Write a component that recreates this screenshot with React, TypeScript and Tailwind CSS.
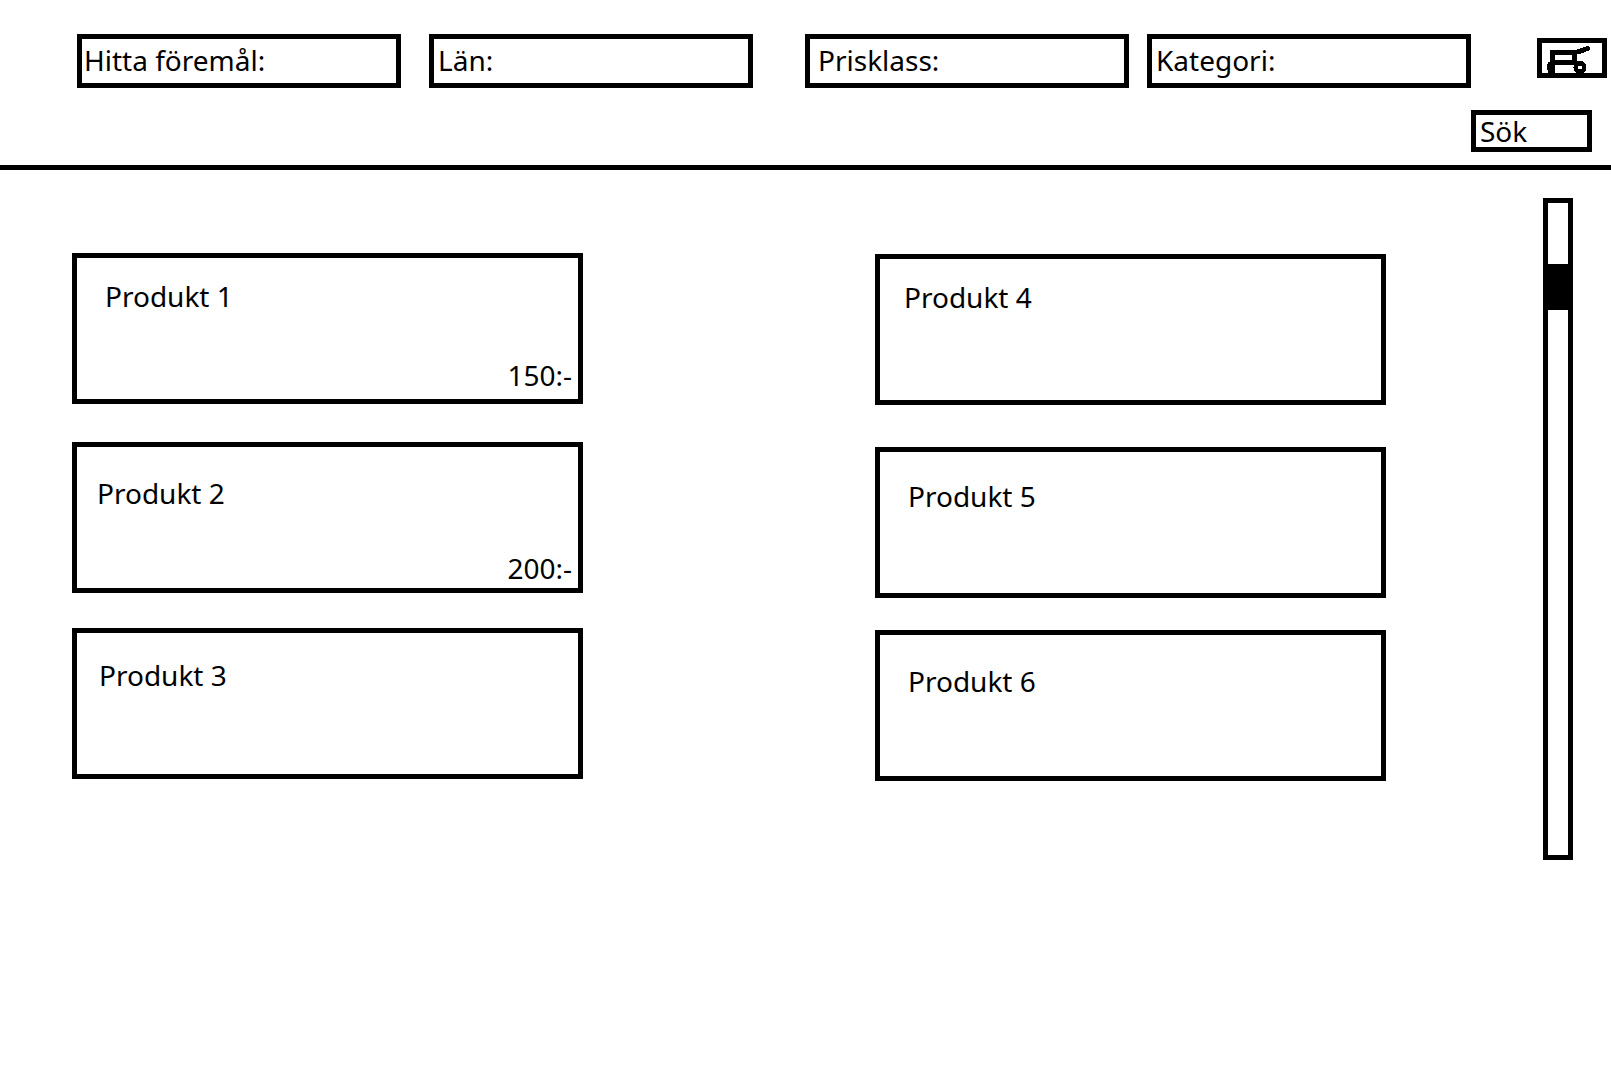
import React from "react";

type Field = { id: string; label: string; box: string; text: string };
type Product = { name: string; price?: string; card: string; text: string };

const fields: Field[] = [
  { id: "item", label: "Hitta föremål:", box: "", text: "pl-0.5" },
  { id: "county", label: "Län:", box: "ml-7", text: "pl-1" },
  { id: "price", label: "Prisklass:", box: "ml-[52px]", text: "pl-2" },
  { id: "category", label: "Kategori:", box: "ml-[18px]", text: "pl-1" },
];

const leftProducts: Product[] = [
  { name: "Produkt 1", price: "150:-", card: "pb-2", text: "pt-5.5 pl-7" },
  { name: "Produkt 2", price: "200:-", card: "mt-[38px] pb-1", text: "pt-7.5 pl-5" },
  { name: "Produkt 3", card: "mt-[35px]", text: "pt-6.5 pl-5.5" },
];

const rightProducts: Product[] = [
  { name: "Produkt 4", card: "", text: "pt-5.5 pl-6" },
  { name: "Produkt 5", card: "mt-[42px]", text: "pt-7 pl-7" },
  { name: "Produkt 6", card: "mt-8", text: "pt-7.5 pl-7" },
];

function SearchField({ id, label, box, text }: Field) {
  return (
    <div className={`flex h-[54px] min-w-0 flex-1 items-center border-5 border-black ${box}`}>
      <label htmlFor={id} className={`pb-0.5 whitespace-nowrap ${text}`}>
        {label}
      </label>
      <input id={id} type="text" className="h-full w-0 min-w-0 flex-1 bg-transparent px-2 outline-none" />
    </div>
  );
}

function ProductCard({ name, price, card, text }: Product) {
  return (
    <article className={`flex h-[151px] flex-col justify-between border-5 border-black ${card}`}>
      <h2 className={text}>{name}</h2>
      {price && <p className="pr-1.5 text-right">{price}</p>}
    </article>
  );
}

function CartIcon() {
  return (
    <svg viewBox="0 0 60 30" className="h-[30px] w-[60px]" fill="none" stroke="black" strokeWidth="5" shapeRendering="crispEdges" aria-hidden="true">
      <path d="M10.5 22V9.5H32.5V19.5H10.5" />
      <path d="M33 9.5L37 8.5L45.5 5.5" strokeLinecap="round" />
      <path d="M8 18H13V30H6V27H5V21H6V19H8Z" fill="black" stroke="none" />
      <circle cx="38" cy="24.5" r="4.2" strokeWidth="4.6" />
    </svg>
  );
}

export default function App() {
  return (
    <div className="min-h-screen bg-white font-['Noto_Sans',sans-serif] text-[28px] leading-8 text-black">
      <header className="border-b-5 border-black pt-[34px] pb-[13px]">
        <form onSubmit={(e) => e.preventDefault()}>
          <div className="flex items-start pr-1 pl-[77px]">
            {fields.map((f) => (
              <SearchField key={f.id} {...f} />
            ))}
            <button type="button" aria-label="Kundvagn" className="mt-1 ml-[66px] h-10 w-[70px] shrink-0 border-5 border-black">
              <CartIcon />
            </button>
          </div>
          <div className="mt-[22px] flex justify-end pr-[19px]">
            <button type="submit" className="h-[42px] w-[121px] border-5 border-black pb-0.5 pl-1 text-left">
              Sök
            </button>
          </div>
        </form>
      </header>

      <main className="flex items-start pt-7 pr-[38px] pl-[72px]">
        <div className="grid flex-1 grid-cols-2 gap-x-[292px] pt-[55px]">
          <section>
            {leftProducts.map((p) => (
              <ProductCard key={p.name} {...p} />
            ))}
          </section>
          <section className="pt-px">
            {rightProducts.map((p) => (
              <ProductCard key={p.name} {...p} />
            ))}
          </section>
        </div>
        <div
          role="scrollbar"
          aria-label="Produkter"
          aria-controls="root"
          aria-orientation="vertical"
          aria-valuenow={10}
          className="ml-[157px] h-[662px] w-[30px] shrink-0 border-5 border-black pt-[61px]"
        >
          <div className="h-[46px] bg-black" />
        </div>
      </main>
    </div>
  );
}
